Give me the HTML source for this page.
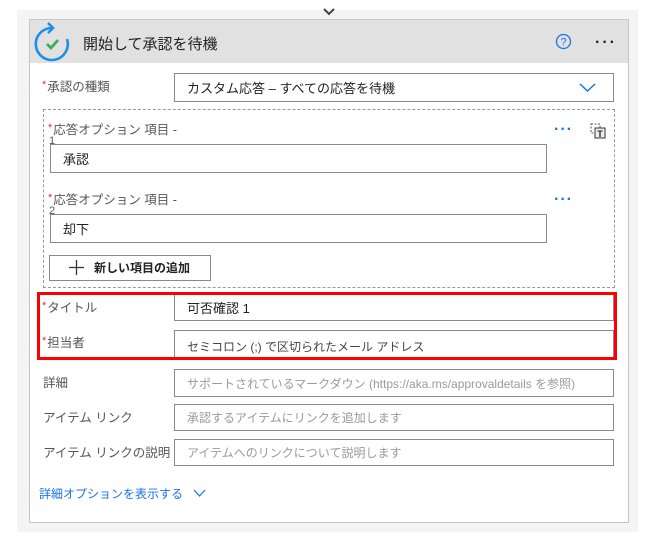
<!DOCTYPE html>
<html><head><meta charset="utf-8"><style>
*{box-sizing:border-box;margin:0;padding:0}
body{width:647px;height:537px;background:#fff;font-family:"Liberation Sans","Noto Sans CJK JP",sans-serif;position:relative;overflow:hidden;color:#333}
.a{position:absolute}
.lbl{position:absolute;font-size:12.5px;color:#555}
.lbl b{color:#d13438;font-weight:normal;font-size:11px;position:relative;top:-3px;margin-right:1px}
.in{position:absolute;border:1px solid #8a8a8a;background:#fff;font-size:12px;padding-left:12px;display:flex;align-items:center}
.ph{color:#9a9a9a}
.dots{position:absolute;color:#1a73e8;font-size:16px;font-weight:bold;letter-spacing:1px}
</style></head><body>
<div class="a" style="left:17px;top:10px;width:621px;height:522px;background:#f4f4f4"></div>
<svg class="a" style="left:322px;top:7px" width="14" height="10"><path d="M2 2 L7 7 L12 2" stroke="#444" stroke-width="2" fill="none"/></svg>
<div class="a" style="left:29px;top:19px;width:600px;height:504px;background:#fff;border:1px solid #c6c6c6"></div>
<div class="a" style="left:30px;top:20px;width:598px;height:43px;background:#e1e1e1"></div>
<svg class="a" style="left:32px;top:20px" width="42" height="44">
<path d="M35 19 A16 16 0 1 1 20 8" stroke="#1f8ee6" stroke-width="2.6" fill="none"/>
<path d="M16 3 L21 8 L16 13" stroke="#1f8ee6" stroke-width="2.6" fill="none"/>
<path d="M15 24 L19 28 L26 20" stroke="#3cae5a" stroke-width="2.8" fill="none"/>
</svg>
<div class="a" style="left:83px;top:33px;font-size:15px;color:#222">開始して承認を待機</div>
<svg class="a" style="left:555px;top:33px" width="17" height="17"><circle cx="8.5" cy="8.5" r="7" stroke="#1a73e8" stroke-width="1.3" fill="none"/><text x="8.5" y="12.5" font-size="11" text-anchor="middle" fill="#1a73e8" font-family="Liberation Sans">?</text></svg>
<div class="a" style="left:595px;top:34px;font-size:16px;letter-spacing:2px;color:#222;font-weight:bold">···</div>

<div class="lbl" style="left:42px;top:76px"><b>*</b>承認の種類</div>
<div class="in" style="left:174px;top:73px;width:440px;height:29px;font-size:13px;color:#222">カスタム応答 – すべての応答を待機</div>
<svg class="a" style="left:579px;top:82px" width="17" height="11"><path d="M1 2 L8.5 9 L16 2" stroke="#1a73e8" stroke-width="1.5" fill="none"/></svg>

<div class="a" style="left:43px;top:109px;width:572px;height:179px;border:1px dashed #999"></div>
<div class="lbl" style="left:48px;top:119px"><b>*</b>応答オプション 項目 -</div>
<div class="lbl" style="left:49px;top:136px;font-size:11px;line-height:11px">1</div>
<div class="in" style="left:50px;top:144px;width:497px;height:29px;font-size:13px;color:#222">承認</div>
<div class="dots" style="left:554px;top:121px">···</div>
<svg class="a" style="left:590px;top:122px" width="17" height="17"><rect x="1" y="2" width="9" height="9" stroke="#555" stroke-dasharray="2 1.5" fill="none"/><rect x="5" y="6" width="10" height="10" stroke="#333" fill="#eee"/><text x="10" y="15" font-size="9" font-weight="bold" text-anchor="middle" fill="#222" font-family="Liberation Sans">T</text></svg>

<div class="lbl" style="left:48px;top:189px"><b>*</b>応答オプション 項目 -</div>
<div class="lbl" style="left:49px;top:206px;font-size:11px;line-height:11px">2</div>
<div class="in" style="left:50px;top:214px;width:497px;height:29px;font-size:13px;color:#222">却下</div>
<div class="dots" style="left:554px;top:191px">···</div>

<div class="a" style="left:49px;top:255px;width:162px;height:26px;border:1px solid #8a8a8a;font-size:12px;font-weight:bold;color:#222;padding-left:44px;line-height:24px">新しい項目の追加</div>
<svg class="a" style="left:68px;top:259px" width="17" height="17"><path d="M8.5 1 V16 M1 8.5 H16" stroke="#333" stroke-width="1.3"/></svg>

<div class="lbl" style="left:42px;top:297px"><b>*</b>タイトル</div>
<div class="in" style="left:174px;top:293px;width:440px;height:28px;font-size:13px;color:#222">可否確認 1</div>
<div class="lbl" style="left:42px;top:332px"><b>*</b>担当者</div>
<div class="in" style="left:174px;top:330px;width:440px;height:29px;font-size:12px;color:#444;align-items:flex-end;padding-bottom:3px">セミコロン (;) で区切られたメール アドレス</div>
<div class="a" style="left:37px;top:292px;width:580px;height:68px;border:3px solid #f00"></div>

<div class="lbl" style="left:43px;top:372px">詳細</div>
<div class="in ph" style="left:174px;top:369px;width:440px;height:28px">サポートされているマークダウン (https://aka.ms/approvaldetails を参照)</div>
<div class="lbl" style="left:43px;top:407px">アイテム リンク</div>
<div class="in ph" style="left:174px;top:404px;width:440px;height:27px">承認するアイテムにリンクを追加します</div>
<div class="lbl" style="left:43px;top:442px">アイテム リンクの説明</div>
<div class="in ph" style="left:174px;top:439px;width:440px;height:27px">アイテムへのリンクについて説明します</div>

<div class="a" style="left:39px;top:485px;font-size:12px;color:#1a73e8">詳細オプションを表示する</div>
<svg class="a" style="left:193px;top:489px" width="13" height="9"><path d="M1 1 L6.5 7 L12 1" stroke="#1a73e8" stroke-width="1.2" fill="none"/></svg>
</body></html>
